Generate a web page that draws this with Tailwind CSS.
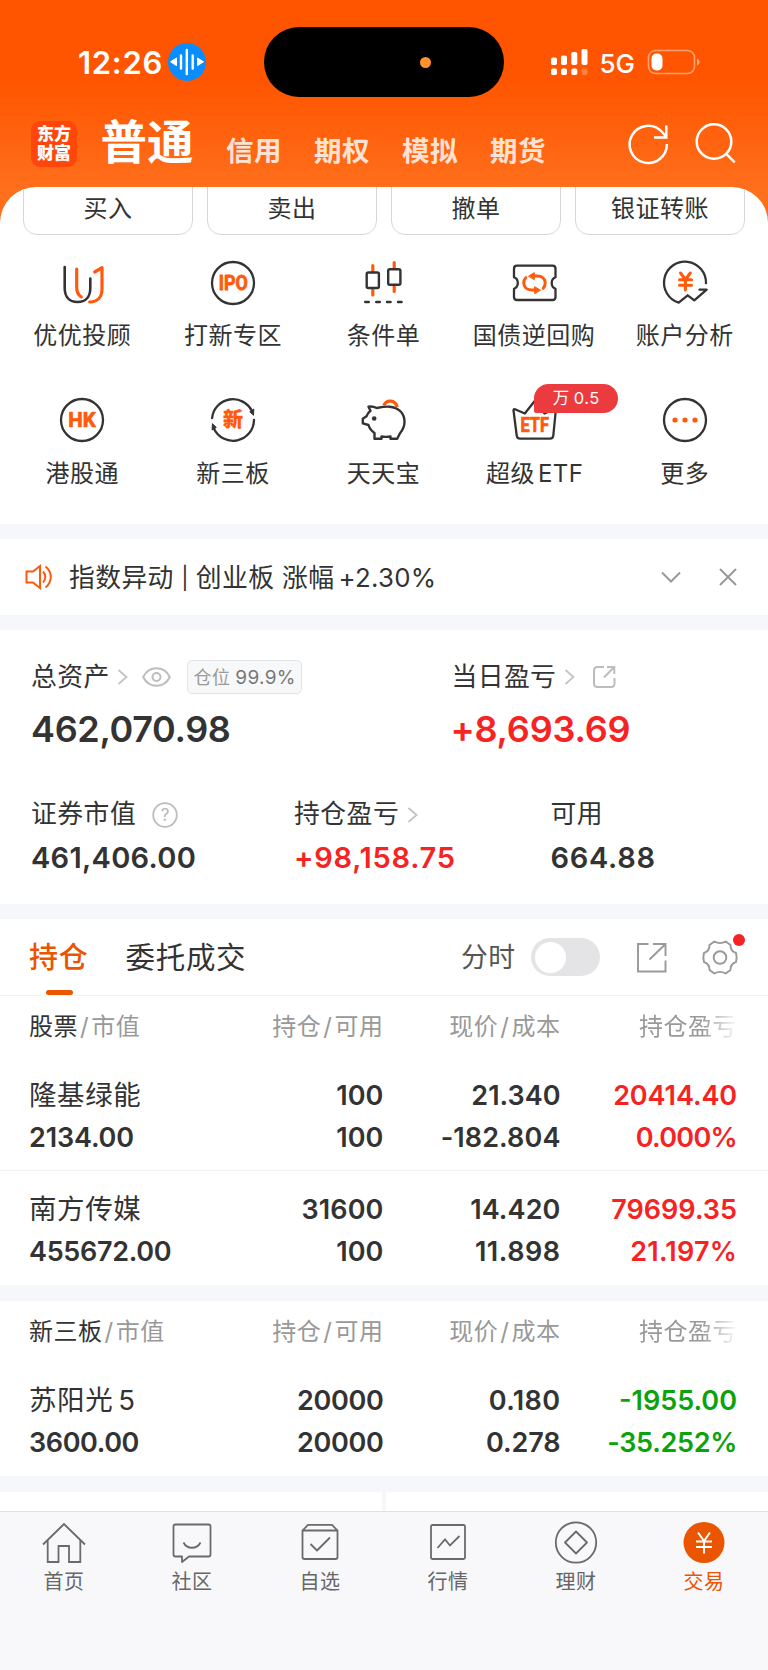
<!DOCTYPE html>
<html lang="zh-CN">
<head>
<meta charset="utf-8">
<title>交易</title>
<script src="https://cdn.jsdelivr.net/npm/@tailwindcss/browser@4"></script>
</head>
<body class="w-[768px] h-[1670px] overflow-hidden bg-[#f6f7fa] font-['Inter','Noto_Sans_CJK_SC',sans-serif] text-[#333]">
<div class="flex flex-col h-[1670px] whitespace-nowrap">

  <!-- header -->
  <header class="h-[230px] -mb-[43px] shrink-0 bg-[linear-gradient(180deg,#ff5500_0px,#ff5500_80px,#ff6f1c_190px,#ff6f1c_230px)] text-white">
    <div class="flex items-center h-[124px] pl-[78px]">
      <span class="w-[90px] text-[31px] leading-none font-semibold tracking-[0.700px]">12:26</span>
      <svg class="shrink-0 w-[38px] h-[38px]" viewBox="0 0 38 38"><circle cx="19" cy="19" r="19" fill="#0a8dff"/><g stroke="#fff" stroke-width="2.400" stroke-linecap="round"><path d="M18.800 7v24M13 12.500v13M24.700 12.500v13"/></g><path d="M2.500 18.800L8.500 15v7.600zM35.500 18.800L29.500 15v7.600z" fill="#fff" stroke="#fff" stroke-linejoin="round"/></svg>
      <div class="shrink-0 ml-[58px] w-[240px] h-[70.500px] rounded-full bg-black flex items-center"><span class="ml-[155.500px] size-[11px] rounded-full bg-[#ff922e]"></span></div>
      <svg class="shrink-0 ml-[47px] w-[37px] h-[27px]" viewBox="0 0 37 27" fill="#fff"><rect x="0" y="8.500" width="6" height="7.500" rx="1.800"/><rect x="10" y="6.500" width="6" height="9.500" rx="1.800"/><rect x="20.300" y="3" width="6" height="13" rx="1.800"/><rect x="30.500" y="0" width="6" height="16" rx="1.800"/><rect x="0" y="19.500" width="6" height="6.500" rx="1.800"/><rect x="10" y="19.500" width="6" height="6.500" rx="1.800"/><rect x="20.300" y="19.500" width="6" height="6.500" rx="1.800"/><rect x="30.500" y="19.500" width="6" height="6.500" rx="1.800" opacity=".25"/></svg>
      <span class="shrink-0 ml-[11.500px] w-[37px] text-[26px] leading-none font-medium tracking-[0px] mt-[3px]">5G</span>
      <svg class="shrink-0 ml-[9.500px] w-[54px] h-[26px]" viewBox="0 0 54 26"><rect x="2.500" y="1.500" width="46" height="23" rx="7" fill="none" stroke="#fff" stroke-opacity=".45" stroke-width="1.600"/><rect x="5.500" y="4.500" width="11" height="17" rx="5" fill="#fff"/><path d="M51 9.500c1.600.8 2.500 2 2.500 3.500s-.9 2.700-2.500 3.500z" fill="#fff" opacity=".5"/></svg>
    </div>
    <div class="flex h-[60px] -mt-[12px] pl-[31px]">
      <div class="mt-[8.500px] size-[46px] rounded-[9px] bg-[#ff470c] flex flex-col items-center justify-center text-[17px] leading-[19px] font-black"><span>东方</span><span>财富</span></div>
      <span class="ml-[23.500px] w-[94.500px] text-[46.500px] leading-[60px] font-bold">普通</span>
      <nav class="ml-[31px] mt-[9px] flex gap-[32px] text-[27.500px] leading-[60px] font-semibold text-[#ffe2d3] tracking-[0.500px]"><span class="w-[56px]">信用</span><span class="w-[56px]">期权</span><span class="w-[56px]">模拟</span><span class="w-[56px]">期货</span></nav>
      <svg class="ml-[79px] mt-[9px] w-[46px] h-[46px]" viewBox="0 0 46 46" fill="none" stroke="#fff" stroke-width="2.500"><path d="M41.800 23a18.600 18.600 0 1 1-5.200-12.500L41 15.500M41.300 4.500v12H29"/></svg>
      <svg class="ml-[20.500px] mt-[9px] w-[46px] h-[46px]" viewBox="0 0 46 46" fill="none" stroke="#fff" stroke-width="2.500"><circle cx="22" cy="20.500" r="17.300"/><path d="M34.200 32.800l8.500 8.500"/></svg>
    </div>
  </header>

  <!-- quick actions -->
  <section class="relative h-[337px] shrink-0 bg-white rounded-t-[36px] overflow-hidden">
    <div class="flex justify-between px-[23px] text-[24px] leading-[44px] tracking-[0.500px] text-center">
      <div class="w-[170px] h-[53px] -mt-[5px] pt-[3.500px] rounded-b-[14px] border border-[#d6d6d9]">买入</div>
      <div class="w-[170px] h-[53px] -mt-[5px] pt-[3.500px] rounded-b-[14px] border border-[#d6d6d9]">卖出</div>
      <div class="w-[170px] h-[53px] -mt-[5px] pt-[3.500px] rounded-b-[14px] border border-[#d6d6d9]">撤单</div>
      <div class="w-[170px] h-[53px] -mt-[5px] pt-[3.500px] rounded-b-[14px] border border-[#d6d6d9]">银证转账</div>
    </div>
    <div class="mt-[24px] pl-[7px] pr-[8px] grid grid-cols-5 gap-y-[41px] text-[24px] tracking-[0.500px] text-center">
      <div class="flex flex-col items-center h-[96px]">
        <svg class="size-[48px]" viewBox="0 0 48 48" fill="none" stroke-width="2.600" stroke-linecap="round" stroke-linejoin="round"><path d="M6.700 8v21C6.700 38 11.500 43 19.500 43S32.300 38 32.300 29V19.500" stroke="#333"/><path d="M18.700 10v18c0 5 1.500 8 4.600 10M36.700 13l7.300-4.300V30c0 8-4.500 13-12.300 13" stroke="#ff5a0c" stroke-width="3.200"/></svg>
        <span class="mt-[11px] leading-[36px]">优优投顾</span>
      </div>
      <div class="flex flex-col items-center h-[96px]">
        <svg class="size-[48px]" viewBox="0 0 48 48"><circle cx="24" cy="24" r="21" fill="none" stroke="#333" stroke-width="2.300"/><text x="9.700" y="31" textLength="29" lengthAdjust="spacingAndGlyphs" font-size="19.500" fill="#ff5a0c" stroke="#ff5a0c" stroke-width=".8" stroke-linejoin="round" class="font-['Roboto'] font-bold tracking-normal">IPO</text></svg>
        <span class="mt-[11px] leading-[36px]">打新专区</span>
      </div>
      <div class="flex flex-col items-center h-[96px]">
        <svg class="size-[48px]" viewBox="0 0 48 48" fill="none" stroke="#333" stroke-width="2.400" stroke-linecap="round"><path d="M13.800 6.500v6M13.800 30v6M35.200 3.500v6M35.200 27v5.500" stroke="#ff5a0c" stroke-width="3.200"/><rect x="7.700" y="13.500" width="12.200" height="15.500" rx="1.500"/><rect x="29.200" y="10.300" width="12.200" height="15.500" rx="1.500"/><path d="M6.200 43h3.600M17.200 43h3.600M28 43h3.600M39 43h3.600"/></svg>
        <span class="mt-[11px] leading-[36px]">条件单</span>
      </div>
      <div class="flex flex-col items-center h-[96px]">
        <svg class="size-[48px]" viewBox="0 0 48 48" fill="none" stroke-linecap="round" stroke-linejoin="round"><path d="M7 6.700h35.500q3 0 3 3v8.500c-2.600 1-3.800 3.300-3.800 5.800s1.200 4.800 3.800 5.800V38q0 3-3 3H7q-3 0-3-3v-8.200c2.600-1 3.800-3.300 3.800-5.800S6.600 19.200 4 18.200V9.700q0-3 3-3z" stroke="#333" stroke-width="2.300"/><g stroke="#ff5a0c" stroke-width="3"><path d="M22 17h5c5.500 0 8.200 3 8.200 7 0 2.300-.7 4-2 5.300M27 31h-5c-5.500 0-8.200-3-8.200-7 0-2.300.7-4 2-5.300"/></g><path d="M18.800 17l5.500-3.300v6.600zM30.200 31l-5.500-3.300v6.600z" fill="#ff5a0c" stroke="#ff5a0c"/></svg>
        <span class="mt-[11px] leading-[36px]">国债逆回购</span>
      </div>
      <div class="flex flex-col items-center h-[96px]">
        <svg class="size-[48px]" viewBox="0 0 48 48" fill="none" stroke-linecap="round" stroke-linejoin="round" stroke-width="2.300"><path d="M45 24.300A21 21 0 1 0 17.700 43.700l9-7.400 6.600 5L45.700 30.700H38.500" stroke="#333"/><path d="M19.500 14l4.900 6.500L29.300 14M18.500 20.800h12M18.500 26.300h12M24.400 20.500V31" stroke="#ff5a0c" stroke-width="3"/></svg>
        <span class="mt-[11px] leading-[36px]">账户分析</span>
      </div>
      <div class="flex flex-col items-center h-[96px]">
        <svg class="size-[48px]" viewBox="0 0 48 48"><circle cx="24" cy="24" r="21" fill="none" stroke="#333" stroke-width="2.300"/><text x="10.300" y="31" textLength="27.500" lengthAdjust="spacingAndGlyphs" font-size="19.500" fill="#ff5a0c" stroke="#ff5a0c" stroke-width=".7" stroke-linejoin="round" class="font-['Roboto'] font-bold tracking-normal">HK</text></svg>
        <span class="mt-[11.500px] leading-[36px]">港股通</span>
      </div>
      <div class="flex flex-col items-center h-[96px]">
        <svg class="size-[48px]" viewBox="0 0 48 48"><path d="M3.100 22A21 21 0 0 1 43 15.300M45 24A21 21 0 0 1 4.900 32.500" fill="none" stroke="#333" stroke-width="2.300" stroke-linecap="round"/><path d="M44.500 19.300L40.800 15.800l4-2.800zM3.400 27.700l3.900 3.700-4.200 2.600z" fill="#333" stroke="#333" stroke-linejoin="round"/><text x="14" y="31.300" font-size="20" fill="#ff5a0c" stroke="#ff5a0c" stroke-width=".3" class="font-['Noto_Sans_CJK_SC'] font-black tracking-normal">新</text></svg>
        <span class="mt-[11.500px] leading-[36px]">新三板</span>
      </div>
      <div class="flex flex-col items-center h-[96px]">
        <svg class="size-[48px]" viewBox="0 0 48 48" fill="none" stroke="#333" stroke-width="2.400" stroke-linejoin="round"><path d="M9.500 10.700c2.500-.6 5.500 0 8.300 1.300 4-.8 8-1.500 12.700-1.300 9 .6 15 6.500 15 15 0 5-2 8.500-4.500 11.500L38.200 42.700H31.500V40.500C28.500 41 25.500 41 22.500 40.500V42.700H15.500V37C12.500 35 10.500 32.500 9.500 29L3.800 27.300V22.700L7.500 20.300c.8-2.300 2-4 4-5.500z"/><circle cx="15.200" cy="22.500" r="2.300" fill="#333" stroke="none"/><path d="M24.800 9.500C27.500 3.500 36 3.500 38.200 11" stroke="#ff5a0c" stroke-width="3.200"/></svg>
        <span class="mt-[11.500px] leading-[36px]">天天宝</span>
      </div>
      <div class="relative flex flex-col items-center h-[96px]">
        <svg class="size-[48px]" viewBox="0 0 48 48"><path d="M3.500 14.300q.2-1.500 1.500-1l9.800 4.200L24.700 5l9.800 12.500 9.800-4.200q1.300-.5 1.500 1L43.300 39.500q-.3 3.200-3.300 3.200H10q-3 0-3.300-3.200z" fill="none" stroke="#333" stroke-width="2.300" stroke-linejoin="round"/><text x="10.500" y="35.700" textLength="28.500" lengthAdjust="spacingAndGlyphs" font-size="19.500" fill="#ff5a0c" stroke="#ff5a0c" stroke-width=".7" stroke-linejoin="round" class="font-['Roboto'] font-bold tracking-normal">ETF</text></svg>
        <span class="mt-[11.500px] pl-[1px] leading-[36px]">超级<span class="ml-[3px] tracking-[0.400px]">ETF</span></span>
        <span class="absolute left-[75.500px] -top-[12px] w-[84px] h-[28.500px] rounded-[14.500px] rounded-bl-[2px] bg-[#ec3b3e] text-white text-[16.500px] leading-[28.500px] tracking-[0.500px]">万<span class="ml-[4px]">0.5</span></span>
      </div>
      <div class="flex flex-col items-center h-[96px]">
        <svg class="size-[48px]" viewBox="0 0 48 48"><circle cx="24" cy="24" r="21" fill="none" stroke="#333" stroke-width="2.300"/><g fill="#ff5a0c"><circle cx="14" cy="24" r="2.600"/><circle cx="24" cy="24" r="2.600"/><circle cx="34" cy="24" r="2.600"/></g></svg>
        <span class="mt-[11.500px] leading-[36px]">更多</span>
      </div>
    </div>
  </section>

  <!-- notice -->
  <section class="mt-[15px] h-[76px] shrink-0 bg-white flex items-center pl-[25px]">
    <svg class="w-[28px] h-[26px]" viewBox="0 0 28 26" fill="none" stroke="#ff5a0c" stroke-width="2"><path d="M1.500 7.500h6.500L15 2v22L8 18.500H1.500zM18 7.500c3 3 3 8 0 11M20.500 2.500c7 5.500 7 15.500 0 21"/></svg>
    <p class="ml-[16px] mt-[1px] text-[25.800px] tracking-[0.400px] leading-[40px] whitespace-pre flex items-center">指数异动<span class="mx-[10px] w-[2px] text-[22px] flex justify-center tracking-normal">|</span>创业板 涨幅<span class="ml-[4px] tracking-[0.300px]">+2.30%</span></p>
    <svg class="ml-auto mr-[38px] w-[20px] h-[12px]" viewBox="0 0 20 12" fill="none" stroke="#999" stroke-width="2"><path d="M1 1.500l9 9 9-9"/></svg>
    <svg class="mr-[31.500px] w-[18px] h-[18px]" viewBox="0 0 18 18" fill="none" stroke="#999" stroke-width="2"><path d="M1 1l16 16M17 1L1 17"/></svg>
  </section>

  <!-- assets -->
  <section class="mt-[15px] h-[274px] shrink-0 bg-white pt-[30px] pl-[31px]">
    <div class="flex h-[100px]">
      <div class="w-[420.500px]">
        <div class="flex items-center h-[34px] text-[25.800px] tracking-[0.400px]">总资产
          <svg class="ml-[7.500px] w-[11px] h-[16px]" viewBox="0 0 11 16" fill="none" stroke="#c4c4c4" stroke-width="1.800"><path d="M1.500 1l8 7-8 7"/></svg>
          <svg class="ml-[14px] w-[29px] h-[20px]" viewBox="0 0 29 20" fill="none" stroke="#bdbdbd" stroke-width="2"><path d="M1.200 10C7-1.700 22-1.700 27.800 10 22 21.700 7 21.700 1.200 10z"/><circle cx="14.500" cy="10" r="4"/></svg>
          <span class="ml-[16px] w-[115px] h-[34px] rounded-[5px] border border-[#e3e4e8] bg-[#f7f8fa] text-center text-[18px] leading-[33px] text-[#999]">仓位<span class="ml-[5px] text-[19px] text-[#777] tracking-[0.300px]">99.9%</span></span>
        </div>
        <div class="mt-[14px] text-[36px] leading-[42px] font-semibold tracking-[-0.350px]">462,070.98</div>
      </div>
      <div>
        <div class="flex items-center h-[34px] text-[25.800px] tracking-[0.400px]">当日盈亏
          <svg class="ml-[7.500px] w-[11px] h-[16px]" viewBox="0 0 11 16" fill="none" stroke="#c4c4c4" stroke-width="1.800"><path d="M1.500 1l8 7-8 7"/></svg>
          <svg class="ml-[17.500px] w-[24px] h-[24px]" viewBox="0 0 24 24" fill="none" stroke="#bdbdbd" stroke-width="2"><path d="M12 2H5.500Q2 2 2 5.500v13Q2 22 5.500 22h13.500q3.500 0 3.500-3.500V13M15 2h7.300v7M22 2.300L12 12.500"/></svg>
        </div>
        <div class="mt-[14px] -ml-[1px] text-[36px] leading-[42px] font-semibold tracking-[-0.200px] text-[#f62323]">+8,693.69</div>
      </div>
    </div>
    <div class="mt-[37px] flex">
      <div class="w-[263px]">
        <div class="flex items-center h-[35px] text-[25.800px] tracking-[0.500px]">证券市值
          <svg class="ml-[15.500px] w-[26px] h-[26px]" viewBox="0 0 26 26"><circle cx="13" cy="13" r="11.800" fill="none" stroke="#bdbdbd" stroke-width="1.800"/><text x="13" y="19" text-anchor="middle" font-size="17" fill="#b5b5b5" class="tracking-normal">?</text></svg>
        </div>
        <div class="mt-[8px] text-[29px] leading-[35px] font-semibold tracking-[0.300px]">461,406.00</div>
      </div>
      <div class="w-[256.500px]">
        <div class="flex items-center h-[35px] text-[25.800px] tracking-[0.500px]">持仓盈亏
          <svg class="ml-[8px] w-[11px] h-[16px]" viewBox="0 0 11 16" fill="none" stroke="#c4c4c4" stroke-width="1.800"><path d="M1.500 1l8 7-8 7"/></svg>
        </div>
        <div class="mt-[8px] text-[29px] leading-[35px] font-semibold tracking-[0.720px] text-[#f62323]">+98,158.75</div>
      </div>
      <div>
        <div class="flex items-center h-[35px] text-[25.800px] tracking-[0.400px]">可用</div>
        <div class="mt-[8px] text-[29px] leading-[35px] font-semibold tracking-[0.700px]">664.88</div>
      </div>
    </div>
  </section>

  <!-- holdings tabs -->
  <section class="mt-[15px] shrink-0 bg-white">
    <div class="flex items-center h-[77px] border-b border-[#f3f3f5] pl-[29px]">
      <div class="relative w-[60px] h-[76px] text-[29px] leading-[77px] font-medium text-[#eb5500] tracking-[0.700px]">持仓<span class="absolute left-[17px] bottom-0 w-[27px] h-[5.500px] rounded-full bg-[#eb5500]"></span></div>
      <span class="ml-[36.500px] w-[129.500px] text-[29.500px] leading-[77px] tracking-[0.700px]">委托成交</span>
      <span class="ml-[206px] w-[70px] text-[26.800px] tracking-[0.500px] text-[#555] leading-[77px]">分时</span>
      <span class="w-[69px] h-[38px] rounded-full bg-[#e4e4e6] flex items-center pl-[3.500px]"><span class="size-[31px] rounded-full bg-white"></span></span>
      <svg class="ml-[35.500px] w-[31px] h-[31px]" viewBox="0 0 31 31" fill="none" stroke="#999" stroke-width="1.900"><path d="M12.500 2H2v27.500h27.500V18.500M17 2h12.500v12M29.300 2.200L13.500 17.500"/></svg>
      <div class="relative ml-[34px] w-[38px] h-[38px]">
        <svg class="w-[38px] h-[38px]" viewBox="0 0 38 38" fill="none" stroke="#999" stroke-width="1.900" stroke-linejoin="round"><circle cx="19" cy="19.500" r="6.300"/><path d="M13.300 3.500Q19 6.700 24.700 3.500L29.500 7Q29.300 13 35 15L35.700 19.500 35 24Q29.300 26 29.500 32L24.700 35.500Q19 32.300 13.300 35.500L8.500 32Q8.700 26 3 24L2.300 19.500 3 15Q8.700 13 8.500 7z"/></svg>
        <span class="absolute left-[32px] -top-[4px] size-[12px] rounded-full bg-[#f52424]"></span>
      </div>
    </div>

    <div class="grid grid-cols-[200px_154.500px_177px_176.500px] pl-[29px] h-[62px] items-center text-right text-[24px] tracking-[0.500px] text-[#999]">
      <span class="text-left"><span class="text-[#333]">股票</span><span class="mx-[2px]">/</span>市值</span><span>持仓<span class="mx-[2px]">/</span>可用</span><span>现价<span class="mx-[2px]">/</span>成本</span><span class="[mask-image:linear-gradient(90deg,#000_80%,transparent_101%)]">持仓盈亏</span>
    </div>
    <div class="grid grid-cols-[200px_154.500px_177px_176.500px] content-start pl-[29px] h-[113px] pt-[17px] leading-[41.500px] text-right text-[27px] font-semibold border-b border-[#f3f3f5]">
      <span class="text-left text-[27.500px] font-normal tracking-[0.600px]">隆基绿能</span><span class="tracking-[0.100px]">100</span><span>21.340</span><span class="text-[#f62323] tracking-[-0.100px]">20414.40</span>
      <span class="text-left tracking-[-0.150px]">2134.00</span><span class="tracking-[0.100px]">100</span><span class="tracking-[0.100px]">-182.804</span><span class="text-[#f62323] tracking-[-0.700px]">0.000%</span>
    </div>
    <div class="grid grid-cols-[200px_154.500px_177px_176.500px] content-start pl-[29px] h-[114px] pt-[18px] leading-[41.500px] text-right text-[27px] font-semibold">
      <span class="text-left text-[27.500px] font-normal tracking-[0.600px]">南方传媒</span><span class="tracking-[0.100px]">31600</span><span class="tracking-[0.100px]">14.420</span><span class="text-[#f62323]">79699.35</span>
      <span class="text-left tracking-[-0.300px]">455672.00</span><span class="tracking-[0.100px]">100</span><span class="tracking-[0.500px]">11.898</span><span class="text-[#f62323] tracking-[0.200px]">21.197%</span>
    </div>
  </section>

  <section class="mt-[16px] shrink-0 bg-white">
    <div class="grid grid-cols-[200px_154.500px_177px_176.500px] pl-[29px] h-[62px] items-center text-right text-[24px] tracking-[0.500px] text-[#999]">
      <span class="text-left"><span class="text-[#333]">新三板</span><span class="mx-[2px]">/</span>市值</span><span>持仓<span class="mx-[2px]">/</span>可用</span><span>现价<span class="mx-[2px]">/</span>成本</span><span class="[mask-image:linear-gradient(90deg,#000_80%,transparent_101%)]">持仓盈亏</span>
    </div>
    <div class="grid grid-cols-[200px_154.500px_177px_176.500px] content-start pl-[29px] h-[113px] pt-[17px] leading-[41.500px] text-right text-[27px] font-semibold">
      <span class="text-left text-[27.500px] font-normal tracking-[0.600px]">苏阳光<span class="ml-[5px]">5</span></span><span class="tracking-[-0.300px]">20000</span><span class="tracking-[0.400px]">0.180</span><span class="text-[#0ba30b]">-1955.00</span>
      <span class="text-left tracking-[-0.400px]">3600.00</span><span class="tracking-[-0.300px]">20000</span><span class="tracking-[-0.100px]">0.278</span><span class="text-[#0ba30b] tracking-[-0.300px]">-35.252%</span>
    </div>
  </section>

  <div class="mt-[16px] h-[19px] shrink-0 flex gap-[4px]"><span class="flex-1 bg-white"></span><span class="flex-1 bg-white"></span></div>

  <!-- tab bar -->
  <nav class="flex-1 grid grid-cols-6 border-t border-[#dfe0e4] bg-[#f8f8fb] pt-[8px] text-[20px] leading-[28px] tracking-[0.600px] text-center text-[#666]">
    <div class="flex flex-col items-center"><svg class="size-[46px]" viewBox="0 0 46 46" fill="none" stroke="#6a6a6a" stroke-width="1.800"><path d="M2 24.500L23 4l21 20.500M6.700 20.500V42H17.500V26H28V42H39.300V20.500"/></svg><span class="mt-[2px]">首页</span></div>
    <div class="flex flex-col items-center"><svg class="size-[46px]" viewBox="0 0 46 46" fill="none" stroke="#6a6a6a" stroke-width="1.800" stroke-linejoin="round"><path d="M6.500 4.500h33q2 0 2 2v28q0 2-2 2H20l-7 5.500v-5.500H6.500q-2 0-2-2v-28q0-2 2-2zM14.500 22.500c3.500 7 13.500 7 17 0"/></svg><span class="mt-[2px]">社区</span></div>
    <div class="flex flex-col items-center"><svg class="size-[46px]" viewBox="0 0 46 46" fill="none" stroke="#6a6a6a" stroke-width="1.800" stroke-linejoin="round"><path d="M5.500 10.500L11 4.800h24l5.500 5.700V37q0 2-2 2h-31q-2 0-2-2zM5.500 10.500h35M13.500 24l6.500 6.500L33 17.500"/></svg><span class="mt-[2px]">自选</span></div>
    <div class="flex flex-col items-center"><svg class="size-[46px]" viewBox="0 0 46 46" fill="none" stroke="#6a6a6a" stroke-width="1.800"><rect x="6" y="5" width="34" height="34" rx="1.500"/><path d="M12.500 28l7.500-8.500 5 6L34.500 16"/></svg><span class="mt-[2px]">行情</span></div>
    <div class="flex flex-col items-center"><svg class="size-[46px]" viewBox="0 0 46 46" fill="none" stroke="#6a6a6a" stroke-width="1.800" stroke-linejoin="round"><circle cx="23" cy="22.500" r="20.200"/><path d="M23 11.500l11 11-11 11-11-11z"/></svg><span class="mt-[2px]">理财</span></div>
    <div class="flex flex-col items-center text-[#eb5500]"><svg class="size-[46px]" viewBox="0 0 46 46" fill="none" stroke="#fff" stroke-width="2"><circle cx="23" cy="22.500" r="20.500" fill="#eb5500" stroke="none"/><path d="M17 12.500l6 8.500 6-8.500M15 21.500h16M15 27h16M23 21v12.500"/></svg><span class="mt-[2px]">交易</span></div>
  </nav>
</div>
</body>
</html>
